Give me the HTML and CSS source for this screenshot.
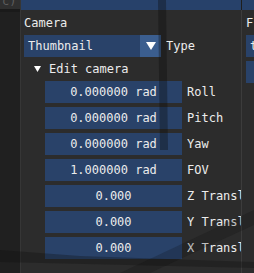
FILE: index.html
```html
<!DOCTYPE html>
<html>
<head>
<meta charset="utf-8">
<link rel="stylesheet" href="styles.css">
</head>
<body>
<div class="screen">
  <div class="scene">
    <svg width="254" height="273" viewBox="0 0 254 273">
      <path d="M158 0 L166 0 L168 150 L160 150 Z" fill="#0c0c0c" opacity="0.35"/>
      <path d="M0 250 L80 256 L254 262 L254 268 L0 262 Z" fill="#0c0c0c" opacity="0.3"/>
      <path d="M120 273 L254 210 L254 225 L150 273 Z" fill="#0c0c0c" opacity="0.2"/>
    </svg>
  </div>
  <div class="left-strip">
    <div class="left-title"><span class="left-title-text">c)</span></div>
  </div>
  <div class="panel">
    <div class="titlebar"></div>
    <div class="body">
      <div class="header">Camera</div>
      <div class="row">
        <div class="combo">
          <span class="combo-text">Thumbnail</span>
          <span class="combo-btn"><svg width="10" height="8" viewBox="0 0 10 8"><path d="M0 0 L10 0 L5 8 Z" fill="#ffffff"/></svg></span>
        </div>
        <span class="label">Type</span>
      </div>
      <div class="tree">
        <svg class="tree-arrow" width="7" height="6" viewBox="0 0 7 6"><path d="M0 0 L7 0 L3.5 6 Z" fill="#ffffff"/></svg>
        <span>Edit camera</span>
      </div>
      <div class="row indent">
        <div class="field">0.000000 rad</div><span class="label">Roll</span>
      </div>
      <div class="row indent">
        <div class="field">0.000000 rad</div><span class="label">Pitch</span>
      </div>
      <div class="row indent">
        <div class="field">0.000000 rad</div><span class="label">Yaw</span>
      </div>
      <div class="row indent">
        <div class="field">1.000000 rad</div><span class="label">FOV</span>
      </div>
      <div class="row indent">
        <div class="field">0.000</div><span class="label">Z Translation</span>
      </div>
      <div class="row indent">
        <div class="field">0.000</div><span class="label">Y Translation</span>
      </div>
      <div class="row indent">
        <div class="field">0.000</div><span class="label">X Translation</span>
      </div>
    </div>
  </div>
  <div class="divider"></div>
  <div class="panel-right">
    <div class="titlebar"></div>
    <div class="body-right">
      <div class="header">F</div>
      <div class="rfield"><span>t</span></div>
      <div class="rfield"></div>
    </div>
  </div>
</div>
</body>
</html>
```
FILE: styles.css
```css
html, body {
  margin: 0;
  padding: 0;
  background: #1e1e1e;
}
.screen {
  position: relative;
  width: 254px;
  height: 273px;
  overflow: hidden;
  display: flex;
  font-family: "DejaVu Sans Mono", monospace;
  font-size: 12px;
  color: #ececec;
}
.scene {
  position: absolute;
  left: 0;
  top: 0;
  z-index: 2;
  pointer-events: none;
}
.left-strip {
  width: 20px;
  flex: none;
  background: #202020;
}
.left-title {
  height: 9px;
  background: #2f2f2f;
  border-bottom: 3px solid #1a1a1a;
  overflow: hidden;
  position: relative;
}
.left-title-text {
  display: block;
  color: #5c5c5c;
  font-size: 12px;
  line-height: 12px;
  margin-top: -5px;
  padding-left: 2px;
  white-space: nowrap;
}
.panel {
  width: 221px;
  flex: none;
  background: #2c2c2c;
  border-left: 1px solid #363636;
  box-sizing: border-box;
}
.titlebar {
  height: 10px;
  background: #27416a;
}
.body {
  display: flex;
  flex-direction: column;
  gap: 4px;
  padding: 5px 0 0 3px;
}
.header {
  height: 16px;
  line-height: 16px;
  white-space: nowrap;
}
.row {
  display: flex;
  align-items: center;
  height: 22px;
  gap: 5px;
}
.indent {
  padding-left: 21px;
}
.combo {
  width: 137px;
  height: 22px;
  display: flex;
  background: #294269;
  flex: none;
}
.combo-text {
  flex: 1;
  line-height: 22px;
  padding-left: 4px;
}
.combo-btn {
  width: 21px;
  height: 22px;
  background: #3b5e8f;
  display: flex;
  align-items: center;
  justify-content: center;
}
.field {
  width: 137px;
  height: 22px;
  line-height: 22px;
  text-align: center;
  background: #294269;
  flex: none;
  white-space: nowrap;
}
.label {
  white-space: nowrap;
  overflow: hidden;
  width: 55px;
}
.tree {
  height: 16px;
  display: flex;
  align-items: center;
  padding-left: 10px;
  gap: 8px;
  line-height: 16px;
}
.tree-arrow {
  flex: none;
}
.divider {
  width: 1px;
  flex: none;
  background: #3c3c3c;
  margin-top: 10px;
}
.panel-right {
  flex: 1;
  background: #2c2c2c;
}
.body-right {
  display: flex;
  flex-direction: column;
  gap: 4px;
  padding: 5px 0 0 4px;
}
.rfield {
  height: 22px;
  background: #294269;
  line-height: 22px;
  padding-left: 4px;
}
```
